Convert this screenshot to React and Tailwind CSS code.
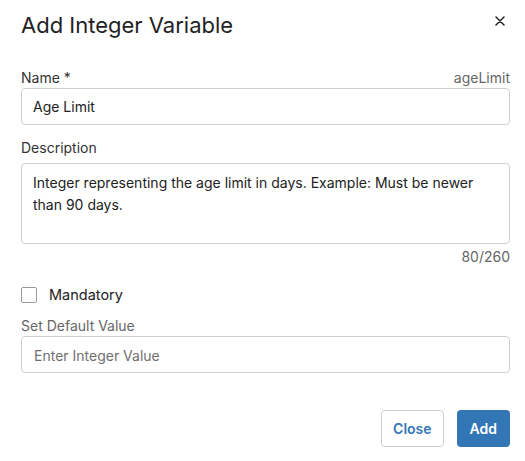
import { useState } from "react";

const AddVariableDialog = () => {
  const [name, setName] = useState("Age Limit");
  const [description, setDescription] = useState(
    "Integer representing the age limit in days. Example: Must be newer than 90 days."
  );
  const [mandatory, setMandatory] = useState(false);
  const [value, setValue] = useState("");

  return (
    <div className="w-[525px] h-[461px] bg-white pl-[21px] pr-[15px] pt-[11px] font-['Inter',sans-serif] text-[#222]">
      <div className="flex items-start justify-between">
        <h1 className="text-[22px] leading-[28px] font-normal text-[#222]">
          Add Integer Variable
        </h1>
        <button className="mt-[5px] mr-[5px] w-[10px] h-[10px] flex items-center justify-center text-[#222]">
          <svg width="10" height="10" viewBox="0 0 10 10">
            <path
              d="M1 1L9 9M9 1L1 9"
              stroke="currentColor"
              strokeWidth="1.5"
              strokeLinecap="round"
            />
          </svg>
        </button>
      </div>

      <div className="mt-[29px] flex justify-between text-[14px] leading-[20px]">
        <label className="text-[#333]">Name *</label>
        <span className="text-[#666]">ageLimit</span>
      </div>
      <input
        type="text"
        value={name}
        onChange={(e) => setName(e.target.value)}
        className="w-full h-[37px] px-[11px] text-[14px] text-[#222] border border-[#cfcfcf] rounded-[4px] outline-none"
      />

      <label className="block mt-[13px] text-[14px] leading-[20px] text-[#333]">
        Description
      </label>
      <textarea
        value={description}
        onChange={(e) => setDescription(e.target.value)}
        className="mt-[5px] block w-full h-[81px] px-[11px] pt-[8px] text-[14px] leading-[22px] text-[#222] border border-[#cfcfcf] rounded-[4px] outline-none resize-none"
      />
      <div className="mt-[3px] text-right text-[14px] leading-[20px] text-[#666]">
        80/260
      </div>

      <label className="mt-[18px] flex items-center gap-[12px] cursor-pointer">
        <input
          type="checkbox"
          checked={mandatory}
          onChange={() => setMandatory((prev) => !prev)}
          className="appearance-none w-[16px] h-[16px] border border-[#9a9a9a] rounded-[2px] bg-white"
        />
        <span className="text-[14.5px] leading-[20px] font-normal text-[#222]">Mandatory</span>
      </label>

      <label className="block mt-[11px] text-[14px] leading-[20px] text-[#666]">
        Set Default Value
      </label>
      <input
        type="text"
        value={value}
        onChange={(e) => setValue(e.target.value)}
        placeholder="Enter Integer Value"
        className="w-full h-[37px] px-[12px] pt-[2px] text-[14px] text-[#222] placeholder:text-[#6f6f6f] border border-[#cfcfcf] rounded-[4px] outline-none"
      />

      <div className="mt-[37px] flex justify-end gap-[13px]">
        <button className="h-[37px] px-[11px] text-[14px] font-semibold text-[#3475b5] bg-white border border-[#cfcfcf] rounded-[4px]">
          Close
        </button>
        <button className="h-[37px] px-[13px] text-[14px] font-semibold text-white bg-[#3376b6] rounded-[4px]">
          Add
        </button>
      </div>
    </div>
  );
};

export default function App() {
  return <AddVariableDialog />;
}
